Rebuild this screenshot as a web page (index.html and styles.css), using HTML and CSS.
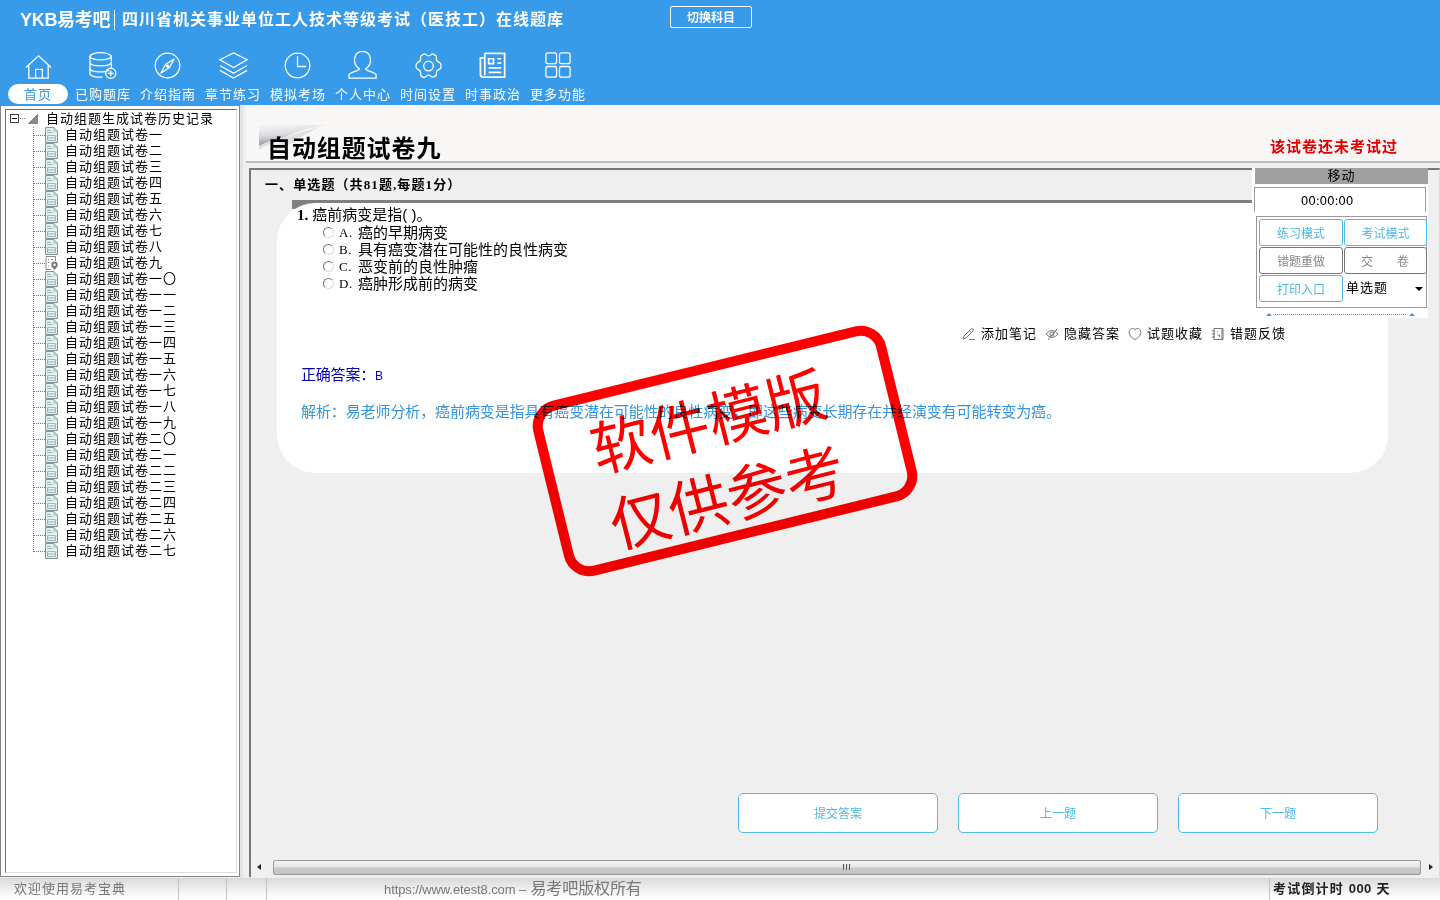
FILE: index.html
```html
<!DOCTYPE html>
<html lang="zh-CN">
<head>
  <meta charset="UTF-8" />
  <title>易考吧在线题库</title>
  <link rel="stylesheet" href="styles.css">
</head>
<body>
  <!-- 顶部 -->
  <header class="top">
    <div class="brand-row">
      <span class="logo">YKB易考吧</span>
      <h1>四川省机关事业单位工人技术等级考试（医技工）在线题库</h1>
      <button class="switch">切换科目</button>
    </div>
    <nav class="nav">
      <a class="nav-item active">
        <svg viewBox="0 0 32 32"><path d="M3 17 16 5l13 12M6 15v13h7v-9h7v9h6V15M13 28h7"/></svg>
        <span>首页</span>
      </a>
      <a class="nav-item">
        <svg viewBox="0 0 32 32"><ellipse cx="13" cy="5.500" rx="11" ry="3.700"/><path d="M2 5.500v18c0 2 5 4 13 3.500M24 5.500v13M2 11.500c0 5 22 5 22 0M2 17.500c0 5 16 5 20 2"/><circle cx="23.500" cy="23" r="5.300"/><path d="M20.500 23h6M23.500 20v6"/></svg>
        <span>已购题库</span>
      </a>
      <a class="nav-item">
        <svg viewBox="0 0 32 32"><circle cx="15" cy="15" r="12.700"/><path d="m22 8-5 9-9 6 5-9zM13.500 14.500l3 3"/><circle cx="15" cy="15.500" r="1"/></svg>
        <span>介绍指南</span>
      </a>
      <a class="nav-item">
        <svg viewBox="0 0 32 32"><path d="m16 2 14 7-14 8L2 9zM2 15l14 8 14-8M2 20l14 8 14-8"/></svg>
        <span>章节练习</span>
      </a>
      <a class="nav-item">
        <svg viewBox="0 0 32 32"><circle cx="15" cy="15" r="12.700"/><path d="M15 5.500V16h9"/></svg>
        <span>模拟考场</span>
      </a>
      <a class="nav-item">
        <svg viewBox="0 0 32 32"><path d="M12 18.500C3.500 13 6 .5 15 .5s11.500 12.500 3 18c0 1.500 11 4 11 6V28H1v-3.500c0-2 11-4.500 11-6z"/></svg>
        <span>个人中心</span>
      </a>
      <a class="nav-item">
        <svg viewBox="0 0 32 32"><path d="M10 4q2-2 3.500 0 2.500 2 5 0Q20 2 22 4q3 1 2 4 0 3 3 3.500 2 1 2 4t-2 3.500q-3 1-3 4 1 2-2 3.500-2 1-3.500-.5-2.500-2-5 0Q12 28 10 27q-3-2-2-4 0-3-3-4-2-1-2-3.500t2-4q3-.5 3-3.500-1-3 2-4z"/><circle cx="16" cy="15.500" r="5"/></svg>
        <span>时间设置</span>
      </a>
      <a class="nav-item">
        <svg class="news" viewBox="0 0 32 32"><path d="M7 2.500h20.500V27H5q-2.500 0-2.500-3V7H7M7 2.500V25M11 8h5v5h-5zM20 8h4M20 12.500h4M11 17.500h13M11 22h13"/></svg>
        <span>时事政治</span>
      </a>
      <a class="nav-item">
        <svg viewBox="0 0 32 32"><rect x="3" y="2" width="11" height="11" rx="2"/><rect x="17" y="2" width="11" height="11" rx="2"/><rect x="3" y="16" width="11" height="11" rx="2"/><rect x="17" y="16" width="11" height="11" rx="2"/></svg>
        <span>更多功能</span>
      </a>
    </nav>
  </header>

  <main class="main">
    <!-- 试卷目录 -->
    <aside class="sidebar">
      <div class="tree">
        <div class="tree-root"><i class="minus"></i><i class="dots"></i><i class="corner"></i><span>自动组题生成试卷历史记录</span></div>
        <ul id="paperList"></ul>
      </div>
    </aside>

    <section class="content">
      <div class="paper-head">
        <h2>
          <svg class="curl" viewBox="0 0 68 36">
            <defs>
              <linearGradient id="curlFill" x1="0" y1="0" x2=".25" y2="1">
                <stop offset="0" stop-color="#f6f6f6"/>
                <stop offset=".5" stop-color="#d9dbde"/>
                <stop offset="1" stop-color="#888d96"/>
              </linearGradient>
            </defs>
            <path d="M0 0h67Q46 3 26 12 12 15 0 21z" fill="url(#curlFill)"/>
            <path d="M0 21q12-6 26-9L60 2Q38 14 24 23q-6 1-10 5 2-8 10-12Q10 18 0 25z" fill="#dfe0e2"/>
          </svg>
          自动组题试卷九
        </h2>
        <strong class="state">该试卷还未考试过</strong>
      </div>

      <div class="paper">
        <h3>一、单选题（共81题,每题1分）</h3>
        <div class="divider"></div>
        <article class="card">
          <p class="question"><b>1.</b>癌前病变是指( )。</p>
          <ul class="options">
            <li><i class="radio"></i><em>A.</em>癌的早期病变</li>
            <li><i class="radio"></i><em>B.</em>具有癌变潜在可能性的良性病变</li>
            <li><i class="radio"></i><em>C.</em>恶变前的良性肿瘤</li>
            <li><i class="radio"></i><em>D.</em>癌肿形成前的病变</li>
          </ul>
          <div class="tools">
            <a><svg viewBox="0 0 14 14"><path d="m2 9 7-7q1-1 2 0t0 2l-7 7-3 1zM7 12.500h6M7.500 3.500l2 2"/></svg>添加笔记</a>
            <a><svg viewBox="0 0 14 14"><path d="M1 7q6-7 12 0-6 7-12 0zM12 2 3 13"/><circle cx="7" cy="7" r="2"/></svg>隐藏答案</a>
            <a><svg viewBox="0 0 14 14"><path d="M7 2.500C4-.2-.2 3 1.500 7 2.500 10 5 11.500 7 12.500 9 11.500 11.500 10 12.500 7 14.200 3 10-.2 7 2.500z"/></svg>试题收藏</a>
            <a><svg viewBox="0 0 14 14"><path d="M3 1.500h9v11H3zM1 4h3M1 7h3M1 10h3M6.500 4.500v1M6.500 8h2v2M11 2v10"/></svg>错题反馈</a>
          </div>
          <p class="answer">正确答案：<small>B</small></p>
          <p class="analysis">解析：易老师分析，癌前病变是指具有癌变潜在可能性的良性病变，即这些病变长期存在并经演变有可能转变为癌。</p>
        </article>

        <div class="actions">
          <button>提交答案</button>
          <button>上一题</button>
          <button>下一题</button>
        </div>

        <div class="scrollbar"><i class="arrow-left"></i><div class="thumb"><i></i><i></i><i></i></div><i class="arrow-right"></i></div>
      </div>
    </section>

    <!-- 浮动面板 -->
    <div class="float-panel">
      <div class="drag">移动</div>
      <div class="timer">00:00:00</div>
      <div class="modes">
        <button>练习模式</button>
        <button>考试模式</button>
        <button class="gray">错题重做</button>
        <button class="gray spread"><span>交</span><span>卷</span></button>
        <button>打印入口</button>
        <div class="type-select">单选题<i></i></div>
      </div>
      <div class="fold"><i></i><b></b><i></i></div>
    </div>

    <!-- 水印印章 -->
    <svg class="stamp" viewBox="-200 -135 400 270">
      <rect x="-176.500" y="-85" width="353" height="170" rx="21" transform="rotate(-13.800)"/>
      <g transform="rotate(-14.200)">
        <text x="-9" y="-10">软件模版</text>
        <text x="-9" y="68">仅供参考</text>
      </g>
    </svg>
  </main>

  <footer class="status">
    <span class="welcome">欢迎使用易考宝典</span>
    <span class="cell"></span>
    <span class="cell"></span>
    <span class="copyright"><small>https://www.etest8.com –</small> 易考吧版权所有</span>
    <strong class="countdown">考试倒计时 <span>000</span> 天</strong>
  </footer>

  <script>
    const names = ['一', '二', '三', '四', '五', '六', '七', '八', '九', '一〇',
      '一一', '一二', '一三', '一四', '一五', '一六', '一七', '一八', '一九', '二〇',
      '二一', '二二', '二三', '二四', '二五', '二六', '二七'];
    const current = '九';

    const docIcon = '<svg viewBox="0 0 13 16"><path class="sheet" d="M.5.500h8.500l3.500 3.500v11.500H.5z"/><path class="lines" d="M9 .5V4h3.500M2 3.500h4M2 5.500h6M2.500 8.500h8v5h-8zM3 11h7"/></svg>';
    const currentIcon = '<svg class="current" viewBox="0 0 13 16"><path d="M6 14.500H1v-13h9.500V6M3 4.500h1M6 4.500h2M3 7.500h1M3 11h1"/><path class="pin" d="M9.500 6.500c-4 0-3.500 4-2.500 5.500l2.500 3 2.500-3c1-1.500 1.500-5.500-2.500-5.500zm0 2a1.200 1.200 0 1 1 0 2.500 1.200 1.200 0 1 1 0-2.500z"/></svg>';

    // 渲染试卷列表
    const list = document.getElementById('paperList');
    names.forEach(name => {
      const li = document.createElement('li');
      li.innerHTML = `<i class="dots"></i>${name === current ? currentIcon : docIcon}<span>自动组题试卷${name}</span>`;
      list.appendChild(li);
    });
  </script>
</body>
</html>
```
FILE: styles.css
```css
* {
  box-sizing: border-box;
}

body {
  margin: 0;
  width: 1440px;
  height: 900px;
  overflow: hidden;
  display: flex;
  flex-direction: column;
  font-family: "Liberation Sans", "Noto Sans CJK SC", sans-serif;
  font-size: 13px;
  color: #000;
  background: #efefef;
}

h1, h2, h3, p, ul {
  margin: 0;
  padding: 0;
}

ul {
  list-style: none;
}

i, em {
  font-style: normal;
  flex: none;
}

svg {
  fill: none;
  flex: none;
}

button {
  padding: 0;
  font-family: inherit;
}

/* 顶部 */
.top {
  height: 105px;
  background: #379be9;
  color: #fff;
}

.brand-row {
  display: flex;
  height: 40px;
  padding-left: 20px;
  align-items: center;
}

.logo {
  width: 95px;
  height: 20px;
  line-height: 20px;
  font-size: 18px;
  font-weight: bold;
  letter-spacing: -0.3px;
  border-right: 1px solid #fff;
  white-space: nowrap;
}

.brand-row h1 {
  width: 548px;
  margin-left: 7px;
  font-size: 16px;
  line-height: 20px;
  letter-spacing: 1px;
  white-space: nowrap;
}

.switch {
  width: 82px;
  height: 22px;
  margin-top: -7px;
  border: 1px solid #fff;
  border-radius: 2px;
  background: none;
  color: #fff;
  font-size: 12px;
  font-weight: bold;
}

.nav {
  display: flex;
  padding: 11px 0 0 5px;
}

.nav-item {
  width: 65px;
  display: flex;
  flex-direction: column;
  align-items: center;
}

.nav-item svg {
  width: 31px;
  height: 31px;
  margin-left: 1px;
  stroke: #fff;
  stroke-width: 1.3;
}

.nav-item .news {
  stroke-width: 1.8;
}

.nav-item span {
  width: 60px;
  height: 20px;
  margin-top: 2px;
  padding-left: 1px;
  border-radius: 10px;
  line-height: 21px;
  letter-spacing: 1px;
  text-align: center;
  white-space: nowrap;
}

.nav-item.active span {
  background: #fff;
  color: #379be9;
}

.main {
  position: relative;
  display: flex;
  height: 773px;
}

/* 左侧目录 */
.sidebar {
  width: 240px;
  height: 772px;
  padding: 3px 2px 3px 4px;
  background: #fff;
  border: 1px solid #858585;
}

.tree {
  height: 100%;
  border: 1px solid #dfdfdf;
  border-top-color: #6d6d6d;
  border-left-color: #6d6d6d;
  letter-spacing: 1px;
}

.tree-root {
  display: flex;
  align-items: center;
  height: 17px;
  padding-left: 4px;
}

.tree-root span {
  margin-top: -2px;
}

.minus {
  width: 9px;
  height: 9px;
  border: 1px solid #444;
  background: linear-gradient(#000, #000) center / 5px 1px no-repeat;
}

.dots {
  border-top: 1px dotted #777;
}

.tree-root .dots {
  width: 5px;
  margin: 0 3px 0 1px;
}

.corner {
  width: 10px;
  height: 10px;
  margin-right: 8px;
  background: linear-gradient(135deg, transparent 48%, #888 50%);
}

.tree ul {
  margin-left: 27px;
  height: 425px;
  border-left: 1px dotted #777;
}

.tree li {
  display: flex;
  align-items: center;
  height: 16px;
}

.tree li span {
  margin-top: -4px;
}

.tree li .dots {
  width: 11px;
}

.tree li svg {
  width: 13px;
  height: 16px;
  margin-right: 7px;
  stroke: #7f989a;
}

.sheet {
  fill: #e3f0f1;
}

.lines {
  stroke: #9fb5b6;
}

.tree li .current {
  stroke: #888;
}

.current .pin {
  fill: #777;
  fill-rule: evenodd;
  stroke: none;
}

/* 试卷区域 */
.content {
  flex: 1;
  padding-left: 6px;
  border-left: 3px solid #e4e4e4;
}

.paper-head {
  display: flex;
  justify-content: space-between;
  height: 58px;
  margin-left: -3px;
  padding: 20px 42px 0 13px;
  background: #f8f7f6;
  border-bottom: 2px solid #bcbcbc;
}

.paper-head h2 {
  position: relative;
  z-index: 0;
  padding: 9px 0 0 8px;
  font-size: 24px;
  line-height: 30px;
  letter-spacing: 0.9px;
  white-space: nowrap;
}

/* 标题后的卷角 */
.curl {
  position: absolute;
  z-index: -1;
  left: 0;
  top: 0;
  width: 68px;
  height: 36px;
}

.state {
  margin-top: 11px;
  font-size: 15px;
  line-height: 22px;
  letter-spacing: 1px;
  color: #e00000;
}

.paper {
  display: flex;
  flex-direction: column;
  height: 709px;
  margin-top: 5px;
  padding-bottom: 2px;
  border-top: 2px solid #777;
  border-left: 2px solid #777;
  border-right: 1px solid #ddd;
}

.paper h3 {
  height: 30px;
  padding-left: 14px;
  font-family: "Liberation Serif", "Noto Sans CJK SC", serif;
  font-size: 13px;
  line-height: 29px;
  letter-spacing: 1.1px;
}

.divider {
  height: 9px;
  margin: 0 186px 0 41px;
  background: #808080;
}

.card {
  z-index: 0;
  width: 1111px;
  height: 270px;
  margin: -6px 0 0 26px;
  padding: 3px 0 0 20px;
  border-radius: 38px;
  background: #fff;
  font-size: 15px;
  line-height: 18px;
}

.question b {
  font-family: "Liberation Serif", serif;
  margin-right: 4px;
}

.options li {
  display: flex;
  align-items: center;
  height: 17px;
  padding-left: 26px;
}

.options em {
  width: 19px;
  font-family: "Liberation Serif", serif;
  font-size: 13px;
  letter-spacing: 0.5px;
}

.radio {
  width: 11px;
  height: 11px;
  margin-right: 5px;
  border: 1px solid #777;
  border-right-color: #ddd;
  border-bottom-color: #ddd;
  border-radius: 50%;
}

.tools {
  display: flex;
  margin: 33px 0 0 665px;
  font-size: 13px;
  letter-spacing: 1px;
}

.tools a {
  display: flex;
  align-items: center;
  width: 83px;
  white-space: nowrap;
}

.tools svg {
  width: 14px;
  height: 14px;
  margin-right: 5px;
  stroke: #777;
}

.answer {
  margin: 23px 0 0 4px;
  letter-spacing: -0.2px;
  color: #0000a8;
}

.answer small {
  font-size: 12px;
}

.analysis {
  margin: 18px 0 0 4px;
  letter-spacing: -0.1px;
  color: #3494dc;
}

.actions {
  display: flex;
  gap: 20px;
  margin: auto 0 26px 487px;
}

.actions button {
  width: 200px;
  height: 40px;
  padding-bottom: 2px;
  border: 1px solid #4eb9e6;
  border-radius: 5px;
  background: #fff;
  color: #4eb9e6;
  font-size: 12px;
}

.scrollbar {
  display: flex;
  align-items: center;
  height: 16px;
  padding: 0 6px;
  background: #f0f0f0;
}

.thumb {
  flex: 1;
  display: flex;
  gap: 1px;
  justify-content: center;
  align-items: center;
  height: 15px;
  margin: 0 8px 0 12px;
  border: 1px solid #999;
  border-radius: 2px;
  background: linear-gradient(#f5f5f5, #e4e4e4 45%, #c9c9cb 55%, #c2c2c4);
}

.thumb i {
  width: 2px;
  height: 6px;
  border-left: 1px solid #555;
  background: #ddd;
}

.arrow-left, .arrow-right {
  border: 3px solid transparent;
  border-right: 4px solid #222;
  border-left: 0;
}

.arrow-right {
  border-right: 0;
  border-left: 4px solid #222;
}

/* 浮动面板 */
.float-panel {
  position: absolute;
  left: 1252px;
  top: 63px;
  width: 176px;
  height: 150px;
  padding-left: 2px;
  background: #fff;
}

.drag {
  height: 16px;
  margin-left: 1px;
  background: #a0a0a3;
  line-height: 15px;
  letter-spacing: 1px;
  text-align: center;
}

.timer {
  width: 172px;
  height: 25px;
  margin-top: 3px;
  padding-right: 26px;
  border: 1px solid #999;
  border-bottom: 0;
  font-family: "DejaVu Sans", sans-serif;
  font-size: 12px;
  line-height: 26px;
  letter-spacing: -0.2px;
  text-align: center;
}

.modes {
  display: grid;
  grid-template-columns: 84px 83px;
  grid-auto-rows: 27px;
  gap: 1px;
  width: 171px;
  height: 92px;
  margin: 4px 0 0 2px;
  padding: 2px 0 2px 2px;
  border: 1px solid #999;
}

.modes button {
  border: 1px solid #4eb9e6;
  border-radius: 3px;
  background: #fff;
  color: #4eb9e6;
  font-size: 12px;
}

.modes .gray {
  border-color: #777;
  color: #888;
}

.modes .spread {
  display: flex;
  justify-content: space-between;
  align-items: center;
  padding: 0 17px 0 16px;
}

.type-select {
  display: flex;
  justify-content: space-between;
  padding: 4px 4px 0 2px;
  line-height: 18px;
  letter-spacing: 1px;
}

.type-select i {
  margin-top: 8px;
  height: 4px;
  border: 4px solid transparent;
  border-top-color: #000;
  border-bottom: 0;
}

.fold {
  display: flex;
  align-items: center;
  height: 10px;
  padding: 2px 13px 0 12px;
}

.fold i {
  border: 3px solid transparent;
  border-bottom-color: #379be9;
  border-top: 0;
}

.fold b {
  flex: 1;
  margin: 0 3px;
  border-top: 1px dotted #379be9;
}

/* 印章 */
.stamp {
  position: absolute;
  left: 525px;
  top: 211px;
  width: 400px;
  height: 270px;
  mix-blend-mode: multiply;
}

.stamp rect {
  stroke: #f00;
  stroke-width: 10;
}

.stamp text {
  fill: #f00;
  font-size: 60px;
  text-anchor: middle;
}

/* 底部状态栏 */
.status {
  display: flex;
  height: 22px;
  background: linear-gradient(#d9d9d9, #fff 90%);
  line-height: 21px;
  color: #777;
}

.welcome {
  width: 179px;
  padding-left: 14px;
  letter-spacing: 1px;
  border-right: 1px solid #c4c4c4;
}

.cell {
  width: 48px;
  border-right: 1px solid #c4c4c4;
}

.cell + .cell {
  width: 40px;
}

.copyright {
  width: 1003px;
  padding-left: 117px;
  font-size: 16px;
  line-height: 22px;
  letter-spacing: -0.1px;
  border-right: 1px solid #c4c4c4;
}

.copyright small {
  font-size: 13px;
}

.countdown {
  padding-left: 3px;
  letter-spacing: 1.2px;
  color: #222;
  white-space: nowrap;
}

.countdown span {
  letter-spacing: 0.4px;
}
```
